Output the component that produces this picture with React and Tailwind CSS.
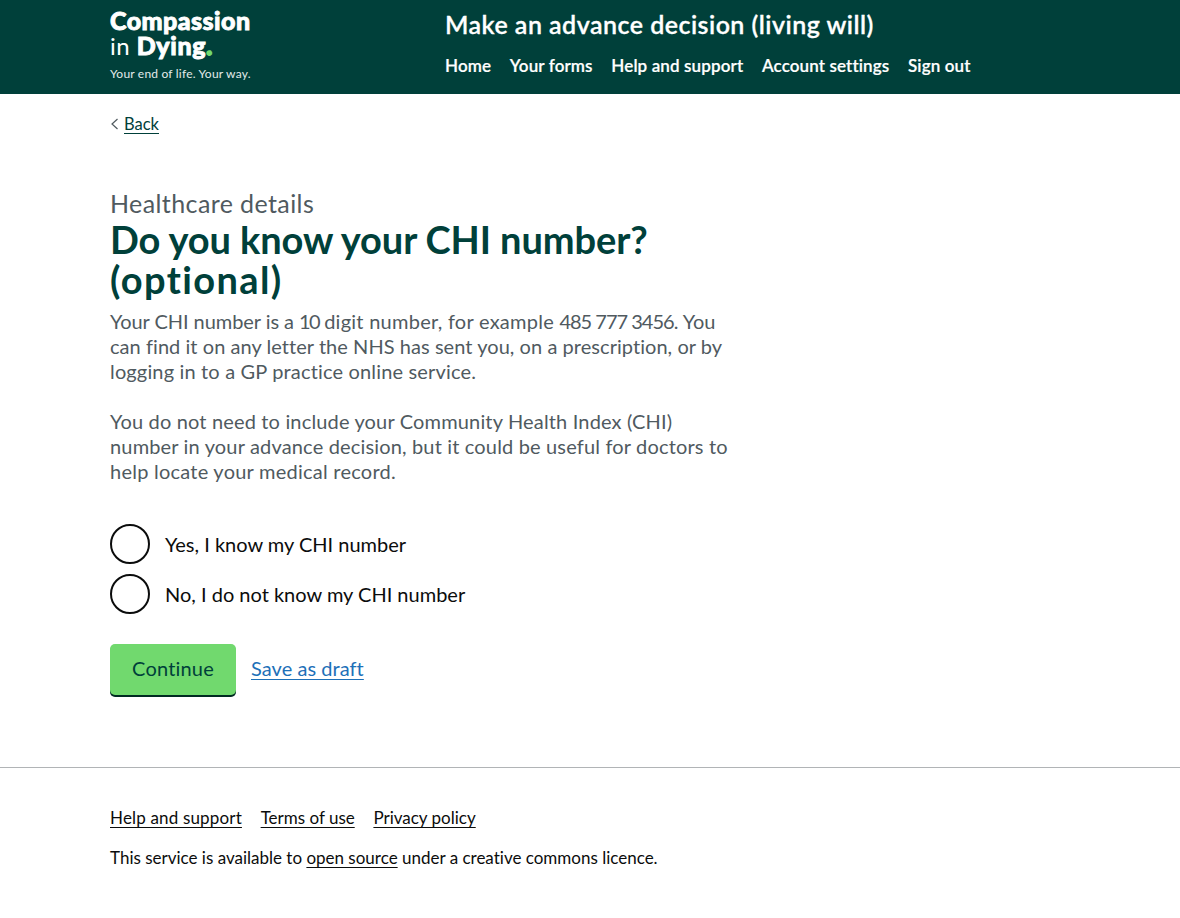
const navItems = ["Home", "Your forms", "Help and support", "Account settings", "Sign out"];
const options = ["Yes, I know my CHI number", "No, I do not know my CHI number"];
const link = "underline decoration-1 underline-offset-[3px]";

function Logo() {
  return (
    <a href="#" className="block h-[94px] w-[335px] shrink-0 pt-[7px] text-white">
      <span className="block text-[25px] leading-[26px] font-black tracking-[0.45px] whitespace-nowrap [-webkit-text-stroke:0.9px_currentColor]">Compassion</span>
      <span className="-mt-px block text-[25px] leading-[26px] tracking-[0.45px] whitespace-nowrap">
        <span className="text-[24px]">in </span>
        <span className="font-black tracking-[0.7px] [-webkit-text-stroke:0.9px_currentColor]">
          Dying<span className="text-[#71d96e] [-webkit-text-stroke:1.8px_currentColor]">.</span>
        </span>
      </span>
      <span className="mt-[2px] block text-[12px] leading-[26px] tracking-[0.2px] whitespace-nowrap text-[#e3ebea]">Your end of life. Your way.</span>
    </a>
  );
}

function Header() {
  return (
    <header className="h-[94px] bg-[#00403a] text-white">
      <div className="mx-auto flex w-[960px]">
        <Logo />
        <div className="pt-[9px]">
          <a href="#" className="block text-[25px] leading-[30px] font-semibold tracking-[0.47px] whitespace-nowrap [-webkit-text-stroke:0.3px_currentColor]">
            Make an advance decision (living will)
          </a>
          <nav className="mt-[15px] flex gap-[18.7px] text-[17px] leading-[24px] font-semibold tracking-[0.12px] whitespace-nowrap [-webkit-text-stroke:0.2px_currentColor]">
            {navItems.map((item) => (
              <a key={item} href="#">{item}</a>
            ))}
          </nav>
        </div>
      </div>
    </header>
  );
}

export default function App() {
  return (
    <div className="min-h-[918px] bg-white font-['Lato',sans-serif] text-[#0b0c0c] [font-variant-ligatures:none]">
      <Header />
      <main className="mx-auto h-[673px] w-[960px]">
        <a href="#" className="flex items-center gap-[5px] pt-[20px] text-[16.5px] leading-[20px] text-[#00403a]">
          <svg className="h-3 w-[9px]" viewBox="0 0 9 12" fill="none" stroke="#505a5f" strokeWidth="1.2">
            <path d="M7.500 1 2 6l5.500 5" />
          </svg>
          <span className={link}>Back</span>
        </a>
        <span className="mt-[54px] block text-[25px] leading-[30px] tracking-[0.4px] text-[#505a5f]">Healthcare details</span>
        <h1 className="mt-[1px] text-[38px] leading-[40px] font-bold tracking-[-0.1px] whitespace-nowrap text-[#00403a]">
          Do you know your CHI number?<br />
          <span className="tracking-[1.4px]">(optional)</span>
        </h1>
        <div className="mt-[10px] text-[20px] leading-[25px] whitespace-nowrap text-[#505a5f]">
          <p>
            <span className="tracking-[-0.06px]">Your CHI number is a </span>
            <span className="tracking-[-1.6px]">10</span>{" "}
            <span className="tracking-[0.26px]">digit number, for example </span>
            <span className="tracking-[-1px]">485 777 3456</span>. You<br />
            <span className="tracking-[0.05px]">can find it on any letter the NHS has sent you, on a prescription, or by</span><br />
            <span className="tracking-[0.16px]">logging in to a GP practice online service.</span>
          </p>
          <p className="mt-[25px] tracking-[0.16px]">
            You do not need to include your Community Health Index (CHI)<br />
            number in your advance decision, but it could be useful for doctors to<br />
            <span className="tracking-[0.24px]">help locate your medical record.</span>
          </p>
        </div>
        <div className="mt-[40px] flex flex-col gap-[10px]">
          {options.map((label) => (
            <label key={label} className="flex h-[40px] items-center gap-[15px] text-[20px] leading-[25px]">
              <input type="radio" name="chi" className="size-[40px] appearance-none rounded-full border-2 border-[#0b0c0c]" />
              <span>{label}</span>
            </label>
          ))}
        </div>
        <div className="mt-[30px] flex gap-[15px] text-[20px] leading-[51px]">
          <button className="h-[51px] w-[126px] rounded-[5px] bg-[#71d96e] pb-[3px] leading-[48px] tracking-[0.2px] text-[#00403a] shadow-[0_2px_0_#002a22]">Continue</button>
          <a href="#" className="-mt-px h-[51px] tracking-[0.05px] text-[#1d70b8] underline decoration-1 underline-offset-[3px]">Save as draft</a>
        </div>
      </main>
      <footer className="border-t border-[#b1b4b6] text-[17px] leading-[20px]">
        <div className="mx-auto w-[960px] pt-[40px]">
          <div className="flex gap-[18.7px]">
            <a href="#" className={`tracking-[0.17px] ${link}`}>Help and support</a>
            <a href="#" className={link}>Terms of use</a>
            <a href="#" className={link}>Privacy policy</a>
          </div>
          <p className="mt-[20px]">
            This service is available to <a href="#" className={link}>open source</a> under a creative commons licence.
          </p>
        </div>
      </footer>
    </div>
  );
}
